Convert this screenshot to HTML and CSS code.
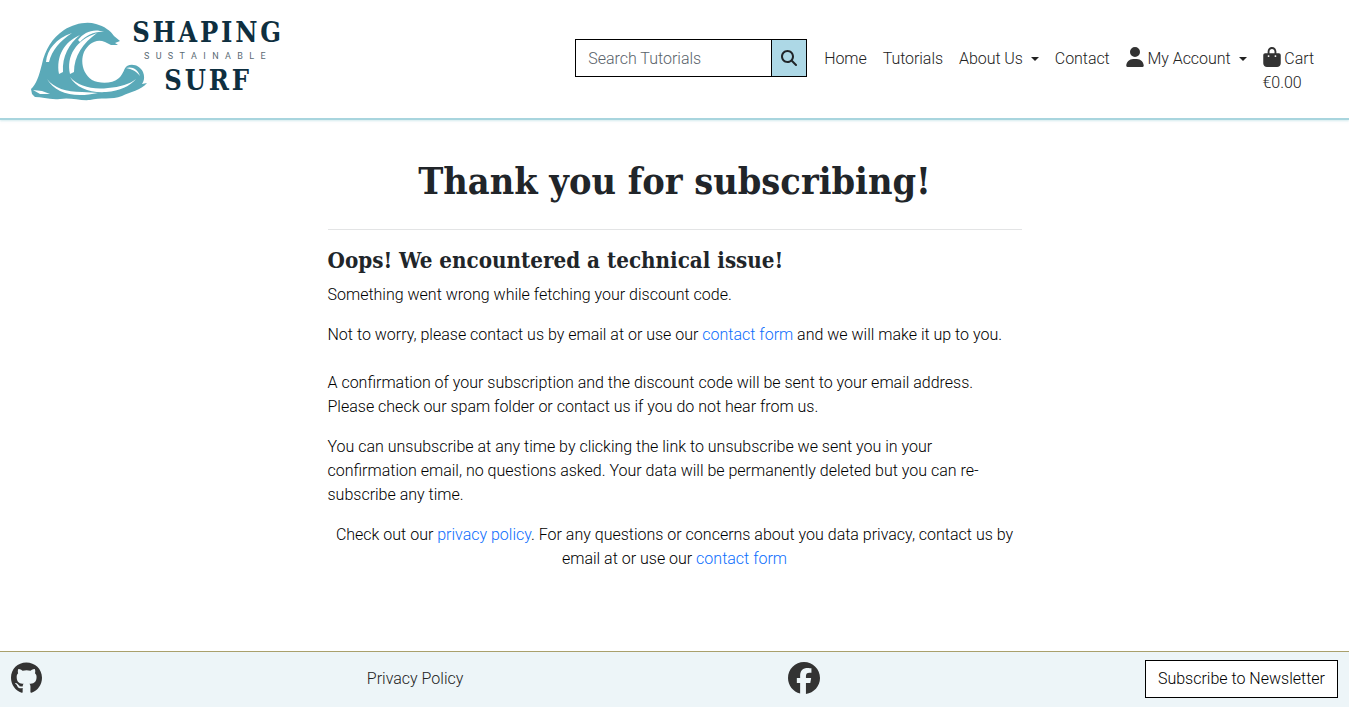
FILE: index.html
```html
<!DOCTYPE html>
<html lang="en">
<head>
  <meta charset="UTF-8" />
  <title>Shaping Sustainable Surf</title>
  <link rel="stylesheet" href="styles.css">
</head>
<body>
  <!-- Header -->
  <header class="site-header">
    <a class="brand" href="#">
      <svg class="brand-wave" viewBox="31 22 117 79" aria-hidden="true">
        <path fill="#5aa9b8" d="M31 89C36 85 39 76 42 64C45 50 52 38 64 30C74 24 86 21 96 24C104 26 111 31 114 36L120 41L115 43L118 45L111 45L105 42C96 38 88 44 84 52C80 62 83 74 92 80C100 84 112 84 119 78C124 73 124 68 127 66C133 63 140 66 143 72C145 77 144 81 142 84L147 83C141 90 130 92 122 96C112 100 100 97 90 100C80 101 70 97 60 99C50 100 42 97 35 97L32 94Z"/>
        <path fill="#fff" d="M46 62C47 50 56 38 72 33C60 41 52 50 49 62Z"/>
        <path fill="#fff" d="M59 74C56 56 64 42 80 35C69 44 62 56 63 72Z"/>
        <path fill="#fff" d="M70 74C66 56 76 40 97 33C83 43 74 56 74 72Z"/>
        <path fill="#fff" d="M78 40C84 32 94 28 104 32C96 31 86 35 80 42Z"/>
        <path fill="#fff" d="M70 77C78 86 92 90 108 88C120 87 130 84 136 79C130 86 120 91 106 92C90 93 76 88 70 77Z"/>
        <path fill="#fff" d="M47 79C54 88 66 92 82 92C88 92 94 93 98 93C84 96 70 96 60 91C54 88 50 84 47 79Z"/>
        <path fill="#fff" d="M126 68C132 66 138 69 140 76C136 71 132 69 126 68Z"/>
        <path fill="#fff" d="M33 90L42 91L50 94L40 94Z"/>
      </svg>
      <span class="brand-text">
        <span class="brand-top">SHAPING</span>
        <span class="brand-mid">SUSTAINABLE</span>
        <span class="brand-bottom">SURF</span>
      </span>
    </a>

    <div class="header-right">
      <form class="search-form">
        <input class="search-input" type="text" placeholder="Search Tutorials">
        <button class="search-btn" type="button" aria-label="Search">
          <svg viewBox="0 0 512 512" width="16" height="16"><path fill="#212529" d="M416 208c0 45.900-14.900 88.300-40 122.700L502.600 457.400c12.500 12.500 12.500 32.800 0 45.300s-32.800 12.500-45.300 0L330.700 376c-34.400 25.200-76.800 40-122.700 40C93.100 416 0 322.900 0 208S93.100 0 208 0S416 93.100 416 208zM208 352a144 144 0 1 0 0-288 144 144 0 1 0 0 288z"/></svg>
        </button>
      </form>

      <nav class="main-nav">
        <a href="#">Home</a>
        <a href="#">Tutorials</a>
        <a href="#" class="has-caret">About Us</a>
        <a href="#">Contact</a>
        <a href="#" class="has-caret">
          <svg class="nav-icon" viewBox="0 0 448 512" width="18" height="20"><path fill="#333" d="M224 256a128 128 0 1 0 0-256 128 128 0 1 0 0 256zm-45.700 48C79.800 304 0 383.800 0 482.300C0 498.700 13.300 512 29.700 512H418.300c16.400 0 29.700-13.300 29.700-29.700C448 383.800 368.200 304 269.700 304H178.300z"/></svg>
          My Account</a>
        <a href="#" class="cart-link">
          <span class="cart-top">
            <svg class="nav-icon" viewBox="0 0 448 512" width="18" height="20"><path fill="#333" d="M160 112c0-35.300 28.700-64 64-64s64 28.700 64 64v48H160V112zm-48 48H48c-26.500 0-48 21.500-48 48V416c0 53 43 96 96 96H352c53 0 96-43 96-96V208c0-26.500-21.500-48-48-48H336V112C336 50.100 285.900 0 224 0S112 50.100 112 112v48zm24 48a24 24 0 1 1 0 48 24 24 0 1 1 0-48zm152 24a24 24 0 1 1 48 0 24 24 0 1 1-48 0z"/></svg>
            Cart
          </span>
          <span>€0.00</span>
        </a>
      </nav>
    </div>
  </header>

  <!-- Main content -->
  <main class="content">
    <h1>Thank you for subscribing!</h1>
    <hr class="divider">
    <h2>Oops! We encountered a technical issue!</h2>
    <p>Something went wrong while fetching your discount code.</p>
    <p class="gap-large">Not to worry, please contact us by email at or use our <a href="#">contact form</a> and we will make it up to you.</p>
    <p>A confirmation of your subscription and the discount code will be sent to your email address. Please check our spam folder or contact us if you do not hear from us.</p>
    <p>You can unsubscribe at any time by clicking the link to unsubscribe we sent you in your confirmation email, no questions asked. Your data will be permanently deleted but you can re-subscribe any time.</p>
    <p class="centered">Check out our <a href="#">privacy policy</a>. For any questions or concerns about you data privacy, contact us by email at or use our <a href="#">contact form</a></p>
  </main>

  <!-- Footer -->
  <footer class="site-footer">
    <a class="social" href="#" aria-label="GitHub">
      <svg viewBox="0 0 496 512" width="31" height="32"><path fill="#333" d="M165.900 397.400c0 2-2.300 3.600-5.200 3.600-3.300.3-5.600-1.300-5.600-3.600 0-2 2.300-3.600 5.200-3.600 3-.3 5.600 1.300 5.600 3.600zm-31.100-4.500c-.7 2 1.300 4.300 4.300 4.900 2.600 1 5.600 0 6.200-2s-1.300-4.300-4.300-5.200c-2.600-.7-5.500.3-6.200 2.300zm44.200-1.700c-2.900.7-4.900 2.600-4.600 4.900.3 2 2.900 3.300 5.900 2.600 2.900-.7 4.900-2.600 4.600-4.600-.3-1.900-3-3.200-5.900-2.900zM244.800 8C106.100 8 0 113.300 0 252c0 110.900 69.800 205.800 169.500 239.200 12.800 2.300 17.300-5.600 17.300-12.100 0-6.200-.3-40.400-.3-61.400 0 0-70 15-84.700-29.800 0 0-11.400-29.100-27.800-36.600 0 0-22.900-15.700 1.600-15.400 0 0 24.900 2 38.600 25.800 21.900 38.600 58.600 27.500 72.900 20.900 2.300-16 8.800-27.100 16-33.700-55.900-6.200-112.300-14.300-112.300-110.500 0-27.500 7.600-41.300 23.600-58.900-2.600-6.500-11.100-33.300 2.600-67.900 20.900-6.500 69 27 69 27 20-5.600 41.500-8.500 62.800-8.500s42.800 2.900 62.800 8.500c0 0 48.100-33.600 69-27 13.700 34.700 5.200 61.400 2.600 67.900 16 17.700 25.800 31.500 25.800 58.900 0 96.500-58.900 104.200-114.800 110.500 9.200 7.900 17 22.900 17 46.400 0 33.700-.3 75.400-.3 83.600 0 6.500 4.600 14.400 17.300 12.100C428.200 457.800 496 362.900 496 252 496 113.300 383.500 8 244.800 8z"/></svg>
    </a>
    <a class="footer-link" href="#">Privacy Policy</a>
    <a class="social" href="#" aria-label="Facebook">
      <svg viewBox="0 0 512 512" width="32" height="32"><path fill="#333" d="M512 256C512 114.600 397.400 0 256 0S0 114.600 0 256C0 376 82.700 476.800 194.200 504.500V334.200H141.400V256h52.800V222.300c0-87.100 39.400-127.500 125-127.500c16.200 0 44.200 3.200 55.700 6.400V172c-6-.6-16.500-1-29.600-1c-42 0-58.200 15.900-58.200 57.200V256h83.600l-14.400 78.200H287V510.100C413.800 494.800 512 386.900 512 256z"/></svg>
    </a>
    <a class="subscribe-btn" href="#">Subscribe to Newsletter</a>
  </footer>
</body>
</html>
```

FILE: styles.css
```css
* {
  box-sizing: border-box;
}

html, body {
  height: 100%;
}

body {
  margin: 0;
  font-family: Roboto, "Liberation Sans", sans-serif;
  font-size: 16px;
  font-weight: 300;
  line-height: 24px;
  color: #000;
  background: #fff;
  display: flex;
  flex-direction: column;
}

a {
  color: #0d6efd;
  text-decoration: none;
}

/* Header */
.site-header {
  height: 120px;
  flex: none;
  display: flex;
  align-items: flex-start;
  justify-content: space-between;
  padding: 0 27px 0 31px;
  border-bottom: 2px solid #a8d5de;
  box-shadow: 0 1px 2px rgba(168, 213, 222, 0.5);
}

.brand {
  display: flex;
  align-items: flex-start;
  color: #0e2f40;
}

.brand-wave {
  width: 117px;
  height: 79px;
  margin-top: 22px;
}

.brand-text {
  display: flex;
  flex-direction: column;
  align-items: center;
  width: 152px;
  margin-top: 15px;
  margin-left: -16px;
  font-family: "DejaVu Serif Condensed", "DejaVu Serif", serif;
  font-weight: 700;
}

.brand-top {
  font-size: 27px;
  line-height: 36px;
  letter-spacing: 2.800px;
}

.brand-mid {
  font-family: Roboto, sans-serif;
  font-weight: 400;
  font-size: 9px;
  line-height: 10px;
  letter-spacing: 6.400px;
  color: #5b6b75;
}

.brand-bottom {
  font-size: 27px;
  line-height: 40px;
  letter-spacing: 2.800px;
}

.header-right {
  display: flex;
  align-items: flex-start;
  padding-top: 39px;
}

.search-form {
  display: flex;
  height: 38px;
  margin-right: 9px;
}

.search-input {
  width: 196px;
  height: 38px;
  padding: 6px 12px;
  border: 1px solid #000;
  border-right: 0;
  border-radius: 0;
  font: inherit;
  outline: none;
}

.search-input::placeholder {
  color: #59626a;
  opacity: 1;
}

.search-btn {
  width: 36px;
  height: 38px;
  padding: 0;
  border: 1px solid #000;
  border-radius: 0;
  background: #add8e6;
  display: flex;
  align-items: center;
  justify-content: center;
}

.main-nav {
  display: flex;
  align-items: flex-start;
  letter-spacing: -0.060px;
}

.main-nav a {
  display: block;
  padding: 8px;
  color: #222;
  white-space: nowrap;
}

.has-caret::after {
  content: "";
  display: inline-block;
  margin-left: 8px;
  vertical-align: 3px;
  border-top: 4.800px solid;
  border-left: 4.800px solid transparent;
  border-right: 4.800px solid transparent;
}

.nav-icon {
  vertical-align: -3px;
}

.cart-link span {
  display: block;
}

/* Main */
.content {
  flex: 1;
  width: 694px;
  margin: 0 auto;
}

h1, h2 {
  font-family: "DejaVu Serif Condensed", "DejaVu Serif", serif;
  font-weight: 700;
  color: #212529;
}

h1 {
  margin: 33px 0 0;
  font-size: 37.500px;
  line-height: 56px;
  text-align: center;
}

.divider {
  margin: 20px 0 16px;
  border: 0;
  border-top: 1px solid #e3e4e5;
}

h2 {
  margin: 0 0 8px;
  font-size: 22.200px;
  line-height: 29px;
}

p {
  margin: 0 0 16px;
}

.gap-large {
  margin-bottom: 24px;
}

.centered {
  text-align: center;
}

/* Footer */
.site-footer {
  flex: none;
  height: 56px;
  display: flex;
  align-items: center;
  justify-content: space-between;
  padding: 0 11px 2px;
  background: #edf5f8;
  border-top: 1px solid #a9a06c;
}

.social {
  display: flex;
  margin-bottom: 2px;
}

.footer-link {
  color: #222;
}

.subscribe-btn {
  height: 38px;
  padding: 6px 12px;
  border: 1px solid #000;
  background: #fff;
  color: #000;
}
```
